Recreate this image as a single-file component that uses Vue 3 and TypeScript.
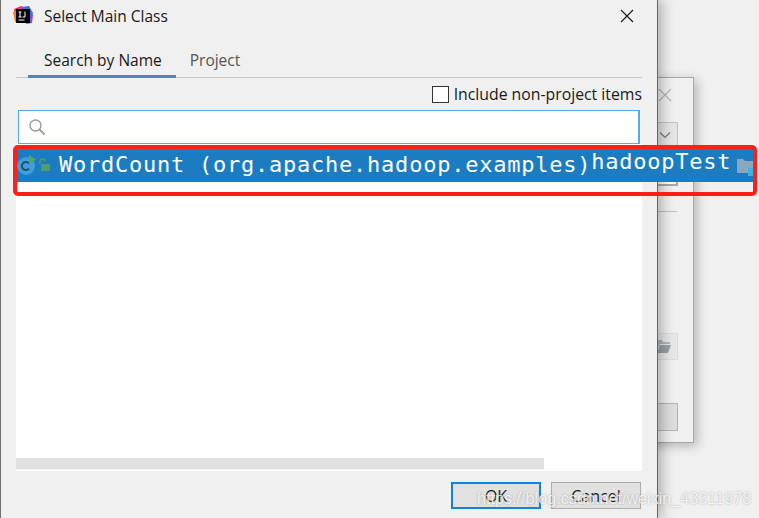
<script setup lang="ts">
const tabs = ['Search by Name', 'Project']
const activeTab = 'Search by Name'
</script>

<template>
  <div class="desktop">
    <!-- window behind the dialog -->
    <div class="back-window">
      <svg class="back-close" width="14" height="14" viewBox="0 0 14 14">
        <path d="M1 1l12 12M13 1L1 13" stroke="#b4b4b4" stroke-width="1.2" fill="none" />
      </svg>
      <div class="back-select">
        <svg width="12" height="8" viewBox="0 0 12 8">
          <path d="M1 1.5l5 5 5-5" stroke="#777" stroke-width="1.2" fill="none" />
        </svg>
      </div>
      <div class="back-field"></div>
      <div class="back-rule"></div>
      <div class="back-folder">
        <svg width="14" height="13" viewBox="0 0 14 13">
          <path d="M0 0h5l1 2h7v2H3L0 10z" fill="#b0b5b8" />
          <path d="M3 5h11l-3 8H0z" fill="#9aa1a6" />
        </svg>
      </div>
      <div class="back-button"></div>
    </div>

    <div class="dialog">
      <header class="title-bar">
        <svg class="logo" width="20" height="20" viewBox="0 0 20 20">
          <path d="M1 3l7-3 6 2-1 9-11 2z" fill="#f5306f" />
          <path d="M9 1l7-1 4 7-2 8-8-4z" fill="#3b6fe0" />
          <path d="M0 6l5-2 2 12-5 0z" fill="#fc801d" />
          <path d="M14 8l6 1-1 8-6 1z" fill="#7c4fe0" />
          <rect x="3" y="3" width="14" height="14" fill="#000" />
          <path d="M5.5 13.5h6v1h-6z" fill="#fff" />
          <path d="M5.5 5.5h3v1h-1v4h1v1h-3v-1h1v-4h-1zM11.5 5.5h1v5q0 1-1 1h-2v-1h2z" fill="#fff" />
        </svg>
        <span class="title">Select Main Class</span>
        <svg class="close" width="14" height="14" viewBox="0 0 14 14">
          <path d="M1 1l12 12M13 1L1 13" stroke="#1a1a1a" stroke-width="1.2" fill="none" />
        </svg>
      </header>

      <nav class="tabs">
        <div
          v-for="tab in tabs"
          :key="tab"
          class="tab"
          :class="{ active: tab === activeTab }"
        >
          {{ tab }}
        </div>
      </nav>

      <div class="options">
        <span class="checkbox"></span>
        <span class="option-label">Include non-project items</span>
      </div>

      <div class="search">
        <svg width="18" height="18" viewBox="0 0 18 18">
          <circle cx="7.5" cy="7.5" r="5.5" stroke="#9a9a9a" stroke-width="1.4" fill="none" />
          <path d="M11.5 11.5l5 5" stroke="#9a9a9a" stroke-width="1.8" fill="none" />
        </svg>
      </div>

      <div class="results">
        <div class="row">
          <svg class="class-icon" width="36" height="22" viewBox="0 0 36 22">
            <circle cx="9" cy="11" r="9" fill="#3f9fdc" />
            <path d="M12 8.5a4 4 0 1 0 0 5" stroke="#24506f" stroke-width="2" fill="none" />
            <path d="M12 0l7 4.5-7 4.5z" fill="#55a85a" />
            <path d="M23 9V6.5a2.5 2.5 0 0 1 5 0" stroke="#4f9d68" stroke-width="1.4" fill="none" />
            <rect x="24" y="9" width="9" height="7" fill="#4f9d68" />
          </svg>
          <span class="class-name">WordCount (org.apache.hadoop.examples)</span>
          <span class="module-name">hadoopTest</span>
          <svg class="module-icon" width="18" height="18" viewBox="0 0 18 18">
            <path d="M0 1h6l2 2h8v12H0z" fill="#8ba6bd" />
            <rect x="11" y="10" width="7" height="8" fill="#3cb3e6" />
          </svg>
        </div>
        <div class="scrollbar"></div>
      </div>

      <footer class="buttons">
        <button class="btn primary">OK</button>
        <button class="btn">Cancel</button>
      </footer>

      <div class="highlight"></div>
    </div>

    <div class="watermark">https://blog.csdn.net/weixin_43311978</div>
  </div>
</template>

<style scoped>
.desktop {
  position: relative;
  width: 759px;
  height: 518px;
  overflow: hidden;
  background: #f0f0f0;
  font-family: "Open Sans", "Noto Sans", sans-serif;
  color: #1a1a1a;
}

.back-window {
  position: absolute;
  left: 600px;
  top: 77px;
  width: 94px;
  height: 366px;
  box-sizing: border-box;
  background: #f0f0f0;
  border: 1px solid #a8a8a8;
  box-shadow: 3px 3px 10px rgba(0, 0, 0, 0.25);
}

.back-close {
  position: absolute;
  left: 57px;
  top: 10px;
}

.back-select {
  position: absolute;
  left: 40px;
  top: 44px;
  width: 37px;
  height: 24px;
  box-sizing: border-box;
  border: 1px solid #c4c4c4;
  background: #e6e6e6;
  padding: 8px 0 0 17px;
}

.back-select svg {
  display: block;
}

.back-field {
  position: absolute;
  left: 40px;
  top: 88px;
  width: 37px;
  height: 20px;
  box-sizing: border-box;
  border: 1px solid #aaa;
  border-width: 0 2px 2px 0;
  background: #fff;
}

.back-rule {
  position: absolute;
  left: 40px;
  top: 133px;
  width: 36px;
  height: 1px;
  background: #c0c0c0;
}

.back-folder {
  position: absolute;
  left: 40px;
  top: 255px;
  width: 37px;
  height: 27px;
  box-sizing: border-box;
  border: 1px solid #dcdcdc;
  background: #e8e8e8;
  padding: 6px 0 0 15px;
}

.back-folder svg {
  display: block;
}

.back-button {
  position: absolute;
  left: 40px;
  top: 325px;
  width: 37px;
  height: 28px;
  box-sizing: border-box;
  border: 1px solid #b4b4b4;
  background: #dedede;
}

.dialog {
  position: relative;
  width: 658px;
  height: 518px;
  box-sizing: border-box;
  display: flex;
  flex-direction: column;
  background: #f0f0f0;
  border-left: 1px solid #6e6e6e;
  border-right: 1px solid #666;
  padding: 0 15px;
  box-shadow: 4px 0 12px rgba(0, 0, 0, 0.28);
}

.title-bar {
  display: flex;
  align-items: center;
  height: 31px;
  margin-left: -3px;
  font-size: 15.5px;
}

.logo {
  flex: none;
  margin-right: 11px;
}

.title {
  flex: 1;
}

.close {
  flex: none;
  margin-right: 8px;
}

.tabs {
  display: flex;
  box-sizing: border-box;
  height: 32px;
  margin-top: 15px;
  padding-left: 12px;
  border-bottom: 1px solid #c9c9c9;
  font-size: 15.5px;
}

.tab {
  height: 32px;
  box-sizing: border-box;
  padding: 3px 14px 0 16px;
  color: #555;
  white-space: nowrap;
}

.tab + .tab {
  padding-left: 14px;
}

.tab.active {
  color: #1a1a1a;
  border-bottom: 3px solid #4a86c8;
}

.options {
  display: flex;
  align-items: center;
  justify-content: flex-end;
  height: 32px;
  font-size: 15.8px;
}

.checkbox {
  width: 17px;
  height: 17px;
  box-sizing: border-box;
  border: 1px solid #333;
  background: #fff;
  margin-right: 5px;
}

.option-label {
  white-space: nowrap;
}

.search {
  display: flex;
  align-items: center;
  height: 34px;
  margin: 0 2px;
  padding-left: 9px;
  box-sizing: border-box;
  border: 1px solid #5aa9e6;
  border-right-width: 2px;
  background: #fff;
}

.results {
  position: relative;
  flex: none;
  box-sizing: border-box;
  height: 327px;
  background: #fff;
  padding-top: 5px;
}

.row {
  display: flex;
  align-items: center;
  width: 738px;
  height: 33px;
  overflow: hidden;
  background: #1b7cc2;
  color: #fff;
  white-space: nowrap;
  font-family: "DejaVu Sans Mono", "Liberation Mono", monospace;
  font-size: 22px;
  letter-spacing: 0.76px;
}

.class-icon {
  flex: none;
  margin-left: 1px;
}

.class-name {
  margin-left: 6px;
  margin-top: -2px;
}

.module-name {
  margin-top: -8px;
}

.module-icon {
  flex: none;
  margin-left: 6px;
  margin-top: 2px;
}

.scrollbar {
  position: absolute;
  left: 0;
  bottom: 1px;
  width: 528px;
  height: 12px;
  box-sizing: border-box;
  background: #e1e1e1;
  border-bottom: 1px solid #f4f4f4;
}

.buttons {
  display: flex;
  justify-content: flex-end;
  gap: 10px;
  margin-top: 11px;
  padding-right: 1px;
}

.btn {
  width: 90px;
  height: 27px;
  box-sizing: border-box;
  border: 1px solid #adadad;
  background: #e1e1e1;
  font-family: "Open Sans", "Noto Sans", sans-serif;
  font-size: 16px;
  color: #1a1a1a;
  padding: 0;
}

.btn.primary {
  border: 2px solid #0f84d8;
}

.highlight {
  position: absolute;
  left: 12px;
  top: 145px;
  width: 744px;
  height: 51px;
  box-sizing: border-box;
  border: 4px solid #ff1f1a;
  border-radius: 5px;
  pointer-events: none;
}

.watermark {
  position: absolute;
  left: 477px;
  top: 489px;
  font-family: "Liberation Sans", Arial, sans-serif;
  font-size: 16.2px;
  white-space: nowrap;
  color: rgba(255, 255, 255, 0.8);
  text-shadow: 0 0 2px rgba(120, 120, 120, 0.6);
}
</style>
